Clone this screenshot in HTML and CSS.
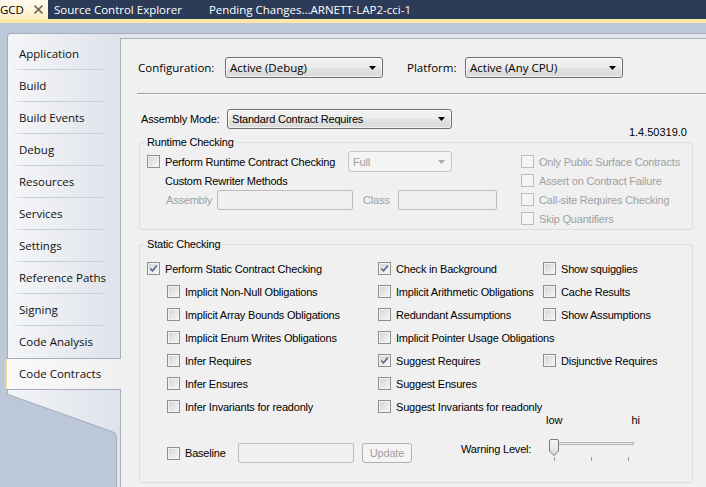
FILE: index.html
```html
<!DOCTYPE html>
<html>
<head>
<meta charset="utf-8">
<title>GCD - Code Contracts</title>
<link rel="stylesheet" href="styles.css">
</head>
<body>
<div class="tabbar">
  <div class="doc-tab active"><span class="tab-title">GCD</span><svg class="close" width="9" height="9" viewBox="0 0 9 9"><path d="M0.5 0.5 L8.5 8.5 M8.5 0.5 L0.5 8.5" stroke="#6F6A60" stroke-width="1.6"/></svg></div>
  <div class="doc-tab">Source Control Explorer</div>
  <div class="doc-tab">Pending Changes...ARNETT-LAP2-cci-1</div>
</div>
<div class="accent"></div>
<div class="frame">
  <nav class="nav">
    <div class="nav-items">
      <div class="nav-item">Application</div>
      <div class="nav-item">Build</div>
      <div class="nav-item">Build Events</div>
      <div class="nav-item">Debug</div>
      <div class="nav-item">Resources</div>
      <div class="nav-item">Services</div>
      <div class="nav-item">Settings</div>
      <div class="nav-item">Reference Paths</div>
      <div class="nav-item">Signing</div>
      <div class="nav-item no-sep">Code Analysis</div>
      <div class="nav-item selected">Code Contracts</div>
    </div>
    <svg class="nav-tail" width="113" height="97" viewBox="0 0 113 97">
      <defs><linearGradient id="tg" x1="0" x2="1" y1="0" y2="0"><stop offset="0" stop-color="#F3F4F7"/><stop offset="1" stop-color="#DEE2EA"/></linearGradient></defs>
      <path d="M0 0 H113 V97 H109 V46 Q109 42.5 105.5 41.5 L0 4 Z" fill="url(#tg)"/>
      <path d="M0.5 0 V4.3 L105.5 41.8 Q109.5 43 109.5 46.5 V97" fill="none" stroke="#A5AEBD"/>
    </svg>
  </nav>
  <div class="content-wrap">
    <main class="content">
      <div class="config-row">
        <span class="seg-label cfg-label">Configuration:</span>
        <div class="combo seg w158"><span>Active (Debug)</span><svg class="arrow" width="7" height="4" viewBox="0 0 7 4"><path d="M0 0 H7 L3.5 4 Z" fill="#000"/></svg></div>
        <span class="seg-label plat-label">Platform:</span>
        <div class="combo seg w158"><span>Active (Any CPU)</span><svg class="arrow" width="7" height="4" viewBox="0 0 7 4"><path d="M0 0 H7 L3.5 4 Z" fill="#000"/></svg></div>
      </div>
      <div class="sep"></div>
      <div class="assembly-row">
        <span class="asm-label">Assembly Mode:</span>
        <div class="combo w225 h20"><span>Standard Contract Requires</span><svg class="arrow" width="7" height="4" viewBox="0 0 7 4"><path d="M0 0 H7 L3.5 4 Z" fill="#000"/></svg></div>
        <span class="version">1.4.50319.0</span>
      </div>

      <fieldset class="group runtime">
        <legend>Runtime Checking</legend>
        <div class="rt-cols">
          <div class="rt-left">
            <div class="rt-row1">
              <label class="check w201"><span class="cb"></span><span>Perform Runtime Contract Checking</span></label>
              <div class="combo disabled w104"><span>Full</span><svg class="arrow" width="7" height="4" viewBox="0 0 7 4"><path d="M0 0 H7 L3.5 4 Z" fill="#ABABAB"/></svg></div>
            </div>
            <div class="rt-row2">Custom Rewriter Methods</div>
            <div class="rt-row3">
              <span class="dim asm-field">Assembly</span>
              <span class="textbox w136"></span>
              <span class="dim class-field">Class</span>
              <span class="textbox w99"></span>
            </div>
          </div>
          <div class="rt-right">
            <label class="check dis-row"><span class="cb dis"></span><span class="dim">Only Public Surface Contracts</span></label>
            <label class="check dis-row"><span class="cb dis"></span><span class="dim">Assert on Contract Failure</span></label>
            <label class="check dis-row"><span class="cb dis"></span><span class="dim">Call-site Requires Checking</span></label>
            <label class="check dis-row"><span class="cb dis"></span><span class="dim">Skip Quantifiers</span></label>
          </div>
        </div>
      </fieldset>

      <fieldset class="group static">
        <legend>Static Checking</legend>
        <div class="st-grid">
          <label class="check"><span class="cb on"><svg width="11" height="11" viewBox="0 0 11 11"><path d="M2.3 5.4 L4.5 7.9 L8.9 2.6" fill="none" stroke="#4B5D88" stroke-width="1.5"/></svg></span><span>Perform Static Contract Checking</span></label>
          <label class="check"><span class="cb on"><svg width="11" height="11" viewBox="0 0 11 11"><path d="M2.3 5.4 L4.5 7.9 L8.9 2.6" fill="none" stroke="#4B5D88" stroke-width="1.5"/></svg></span><span>Check in Background</span></label>
          <label class="check"><span class="cb"></span><span>Show squigglies</span></label>

          <label class="check ind"><span class="cb"></span><span>Implicit Non-Null Obligations</span></label>
          <label class="check"><span class="cb"></span><span>Implicit Arithmetic Obligations</span></label>
          <label class="check"><span class="cb"></span><span>Cache Results</span></label>

          <label class="check ind"><span class="cb"></span><span>Implicit Array Bounds Obligations</span></label>
          <label class="check"><span class="cb"></span><span>Redundant Assumptions</span></label>
          <label class="check"><span class="cb"></span><span>Show Assumptions</span></label>

          <label class="check ind"><span class="cb"></span><span>Implicit Enum Writes Obligations</span></label>
          <label class="check"><span class="cb"></span><span>Implicit Pointer Usage Obligations</span></label>
          <div></div>

          <label class="check ind"><span class="cb"></span><span>Infer Requires</span></label>
          <label class="check"><span class="cb on"><svg width="11" height="11" viewBox="0 0 11 11"><path d="M2.3 5.4 L4.5 7.9 L8.9 2.6" fill="none" stroke="#4B5D88" stroke-width="1.5"/></svg></span><span>Suggest Requires</span></label>
          <label class="check"><span class="cb"></span><span>Disjunctive Requires</span></label>

          <label class="check ind"><span class="cb"></span><span>Infer Ensures</span></label>
          <label class="check"><span class="cb"></span><span>Suggest Ensures</span></label>
          <div></div>

          <label class="check ind"><span class="cb"></span><span>Infer Invariants for readonly</span></label>
          <label class="check"><span class="cb"></span><span>Suggest Invariants for readonly</span></label>
          <div></div>
        </div>
        <div class="bottom-row">
          <div class="bl-group">
            <label class="check w71"><span class="cb"></span><span>Baseline</span></label>
            <span class="textbox w116"></span>
            <span class="btn disabled">Update</span>
          </div>
          <span class="warn-label">Warning Level:</span>
          <div class="slider">
            <div class="slider-labels"><span>low</span><span>hi</span></div>
            <svg class="track" width="96" height="24" viewBox="0 0 96 24">
              <defs><linearGradient id="th" x1="0" x2="0" y1="0" y2="1"><stop offset="0" stop-color="#F7F7F7"/><stop offset="1" stop-color="#D9D9D9"/></linearGradient></defs>
              <rect x="5.5" y="4.5" width="82" height="2" fill="#E6E8EA" stroke="#B4B8BC"/>
              <path d="M8.5 19 V23 M45.5 19 V23 M82.5 19 V23" stroke="#9C9C9C"/>
              <path d="M3.5 3 Q3.5 1.5 5 1.5 H11 Q12.5 1.5 12.5 3 V13 L8 17.5 L3.5 13 Z" fill="url(#th)" stroke="#7A7A7A"/>
            </svg>
          </div>
        </div>
      </fieldset>
    </main>
  </div>
</div>
</body>
</html>
```

FILE: styles.css
```css
* { box-sizing: border-box; }
html, body { margin: 0; padding: 0; }
body {
  width: 706px;
  height: 487px;
  overflow: hidden;
  background: #BCC7D8;
  font-family: "Liberation Sans", Arial, sans-serif;
  font-size: 11px;
  color: #000;
}

/* document tab bar */
.tabbar {
  height: 19px;
  background: #2B3B58;
  display: flex;
  font-family: "Open Sans", "Noto Sans", sans-serif;
  font-size: 11.5px;
  line-height: 19px;
  color: #FFFFFF;
  white-space: nowrap;
}
.doc-tab { padding: 0 21px 0 6px; }
.doc-tab.active {
  width: 48px;
  padding: 0;
  display: flex;
  align-items: center;
  color: #000;
  background: linear-gradient(#FFFBEF, #FFEFC6);
}
.tab-title { margin-right: 10px; }
.close { flex: none; }
.accent { height: 4px; background: #FFE8A6; }

/* frame */
.frame {
  display: flex;
  height: 464px;
  margin-top: 10px;
  padding-left: 7px;
}
.nav {
  width: 113px;
  flex: none;
  display: flex;
  flex-direction: column;
}
.nav-items {
  border-top: 1px solid #A5AEBD;
  border-left: 1px solid #A5AEBD;
  border-top-left-radius: 4px;
  background: linear-gradient(to right, #F5F6F8, #DEE2EA);
  padding-top: 4px;
  font-family: "Open Sans", "Noto Sans", sans-serif;
  font-size: 11.5px;
  color: #111;
}
.nav-item {
  height: 32px;
  display: flex;
  align-items: center;
  padding: 0 0 1px 11px;
  white-space: nowrap;
  background: linear-gradient(to right, rgba(200,206,217,0), #C9CFDA 12%, #C9CFDA 88%, rgba(200,206,217,0)) no-repeat 4px 100% / 98px 1px;
}
.nav-item.no-sep { background: none; }
.nav-item.selected {
  position: relative;
  z-index: 1;
  margin-left: -3px;
  margin-right: -1px;
  padding-left: 12px;
  border-top: 1px solid #A5AEBD;
  border-bottom: 1px solid #A5AEBD;
  border-left: 2px solid #EFD38A;
  background: linear-gradient(to right, #FAFAFA, #F0F0F0);
}
.nav-tail { display: block; flex: none; }

.content-wrap {
  flex: 1;
  border-top: 1px solid #A5AEBD;
  background: #E3E6EC;
  padding-top: 4px;
  display: flex;
}
.content {
  flex: 1;
  background: #F0F0F0;
  border-top: 1px solid #A5AEBD;
  border-left: 1px solid #A5AEBD;
  padding-left: 17px;
}

/* configuration row */
.config-row {
  margin-top: 18px;
  height: 21px;
  display: flex;
  align-items: center;
}
.seg-label, .seg {
  font-family: "Open Sans", "Noto Sans", sans-serif;
  font-size: 11.5px;
  white-space: nowrap;
}
.cfg-label { width: 87px; }
.plat-label { width: 58px; margin-left: 24px; }

.combo {
  height: 21px;
  display: flex;
  align-items: center;
  justify-content: space-between;
  padding: 0 6px 0 4px;
  border: 1px solid #707070;
  border-radius: 3px;
  background: linear-gradient(#F4F4F4 0%, #ECECEC 50%, #E2E2E2 51%, #DADADA 100%);
  box-shadow: inset 0 0 0 1px rgba(255,255,255,0.6);
  white-space: nowrap;
}
.combo .arrow { flex: none; }
.combo.disabled {
  border-color: #C3C3C3;
  background: #F4F4F4;
  color: #A0A0A0;
  box-shadow: none;
}
.w158 { width: 158px; }
.w225 { width: 225px; }
.w104 { width: 104px; }
.h20 { height: 20px; }

.sep {
  margin: 15px 0 0 -1px;
  height: 2px;
  border-top: 1px solid #A0A0A0;
  border-bottom: 1px solid #FFFFFF;
}

.assembly-row {
  margin-top: 14px;
  height: 20px;
  padding-left: 3px;
  display: flex;
  align-items: center;
  letter-spacing: -0.2px;
}
.asm-label { width: 86px; white-space: nowrap; }
.version {
  margin-left: auto;
  margin-right: 19px;
  align-self: flex-end;
  margin-bottom: -10px;
  line-height: 13px;
  letter-spacing: 0;
}

/* group boxes */
.group {
  margin: 7px 13px 0 1px;
  min-width: 0;
  border: 1px solid #D5DFE5;
  border-radius: 3px;
  padding: 2px 0 1px 7px;
  letter-spacing: -0.2px;
}
.group legend {
  padding: 0 2px;
  margin-left: -2px;
  line-height: 13px;
  font-size: 11px;
}
.static { margin-top: 8px; padding: 6px 0 14px 7px; }

.check {
  display: flex;
  align-items: center;
  gap: 5px;
  white-space: nowrap;
}
.cb {
  flex: none;
  width: 13px;
  height: 13px;
  border: 1px solid #8F8F8F;
  background: linear-gradient(135deg, #D2D2D2, #F8F8F8);
  box-shadow: inset 0 0 0 1px #F3F3F3;
  display: flex;
}
.cb.dis {
  border-color: #BDBDBD;
  background: #F5F5F5;
  box-shadow: none;
}
.dim { color: #A0A0A0; }

/* runtime */
.rt-cols { display: flex; }
.rt-left { width: 374px; flex: none; }
.rt-row1 { height: 21px; display: flex; align-items: center; }
.w201 { width: 201px; }
.rt-row2 { height: 18px; display: flex; align-items: center; padding-left: 18px; }
.rt-row3 { height: 20px; display: flex; align-items: center; padding-left: 19px; }
.asm-field { width: 51px; }
.class-field { width: 35px; margin-left: 10px; }
.textbox {
  height: 20px;
  border: 1px solid #BCBCBC;
  border-radius: 2px;
  background: #F0F0F0;
}
.w136 { width: 136px; }
.w99 { width: 99px; }
.w116 { width: 116px; }
.w71 { width: 71px; }
.rt-right { padding-top: 1px; }
.dis-row { height: 19px; }

/* static */
.st-grid {
  display: grid;
  grid-template-columns: 231px 165px auto;
  grid-auto-rows: 23px;
}
.check.ind { padding-left: 20px; }

.bottom-row {
  height: 50px;
  display: flex;
  align-items: flex-start;
}
.bl-group {
  margin: 24px 0 0 20px;
  height: 22px;
  display: flex;
  align-items: center;
}
.btn {
  width: 50px;
  height: 20px;
  margin-left: 8px;
  display: flex;
  align-items: center;
  justify-content: center;
  border: 1px solid #ADB2B5;
  border-radius: 3px;
  background: #F4F4F4;
  color: #A0A0A0;
}
.warn-label {
  width: 85px;
  margin: 25px 0 0 49px;
  line-height: 13px;
  white-space: nowrap;
}
.slider { width: 96px; margin-top: -3px; }
.slider-labels {
  height: 11px;
  line-height: 11px;
  display: flex;
  justify-content: space-between;
  padding-right: 2px;
  letter-spacing: 0;
}
.track { display: block; margin-top: 12px; }
```
